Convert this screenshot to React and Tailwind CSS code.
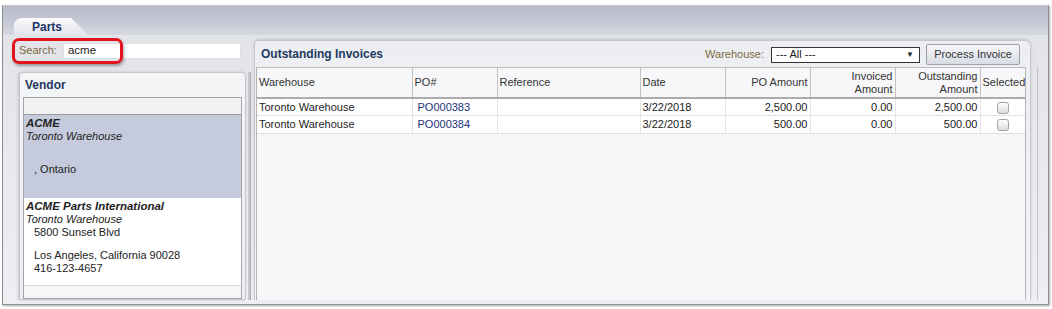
import React from 'react';

// Colonnes du tableau des factures
const columns = [
  { label: 'Warehouse', width: 'w-[155px]', align: 'text-left' },
  { label: 'PO#', width: 'w-[85px]', align: 'text-left' },
  { label: 'Reference', width: 'w-[143px]', align: 'text-left' },
  { label: 'Date', width: 'w-[85px]', align: 'text-left' },
  { label: 'PO Amount', width: 'w-[85px]', align: 'text-right' },
  { label: ['Invoiced', 'Amount'], width: 'w-[85px]', align: 'text-right' },
  { label: ['Outstanding', 'Amount'], width: 'w-[85px]', align: 'text-right' },
  { label: 'Selected', width: 'w-[45px]', align: 'text-center' },
];

const invoices = [
  { warehouse: 'Toronto Warehouse', po: 'PO000383', reference: '', date: '3/22/2018', amount: '2,500.00', invoiced: '0.00', outstanding: '2,500.00' },
  { warehouse: 'Toronto Warehouse', po: 'PO000384', reference: '', date: '3/22/2018', amount: '500.00', invoiced: '0.00', outstanding: '500.00' },
];

const Checkbox = () => (
  <span className="inline-block w-[12px] h-[12px] rounded-[3px] border border-[#a4a4a4] bg-gradient-to-b from-white to-[#dedede] align-middle" />
);

const VendorList = () => (
  <div className="flex-1 mx-[3px] flex flex-col border border-[#a6a6a6] bg-[#f6f6f8] min-h-0">
    <div className="h-[17px] shrink-0 bg-[#f1f1f3] border-b border-[#9b9b9b]" />
    {/* ACME (sélectionné) */}
    <div className="h-[83px] shrink-0 bg-[#c5cbdc] pt-[2px] pl-[2px] leading-[13px]">
      <div className="font-bold italic text-[11.5px]">ACME</div>
      <div className="italic">Toronto Warehouse</div>
      <div className="h-[20px]" />
      <div className="pl-[8px]">, Ontario</div>
    </div>
    {/* ACME Parts International */}
    <div className="h-[88px] shrink-0 bg-white pt-[2px] pl-[2px] leading-[13px] border-b border-[#d9d9d9]">
      <div className="font-bold italic text-[11.5px]">ACME Parts International</div>
      <div className="italic">Toronto Warehouse</div>
      <div className="pl-[8px]">5800 Sunset Blvd</div>
      <div className="h-[10px]" />
      <div className="pl-[8px]">Los Angeles, California 90028</div>
      <div className="pl-[8px]">416-123-4657</div>
    </div>
  </div>
);

export default function App() {
  return (
    <div className="w-[1052px] h-[309px] bg-white pt-[5px] pl-[2px] pr-[3px] pb-[4px] font-['Liberation_Sans',Arial,sans-serif] text-[11px] text-[#222]">
      <div className="h-full flex flex-col border border-[#8f8f8f] border-t-[#c9c9c9] shadow-[1px_1px_2px_rgba(0,0,0,0.35)]">
        {/* Barre d'onglets */}
        <div className="h-[29px] shrink-0 flex items-end pl-[11px] bg-gradient-to-b from-[#b7bcc9] via-[#c3c7d3] to-[#d6d8e1]">
          <div className="w-[74px] h-[17px] pl-[18px] flex items-center bg-gradient-to-b from-[#fbfbfd] to-[#e4e5eb] [clip-path:polygon(0_6px,2px_2px,7px_0,57px_0,74px_17px,0_17px)]">
            <span className="font-bold text-[12px] text-[#1d3567]">Parts</span>
          </div>
        </div>

        <div className="flex-1 flex min-h-0 bg-gradient-to-b from-[#e3e4ea] to-[#eeeff3]">
          {/* Colonne gauche : recherche + fournisseurs */}
          <div className="ml-[9px] w-[236px] flex flex-col pb-[4px]">
            <div className="relative mt-[3px] h-[25px] shrink-0 flex items-center pl-[7px]">
              <span className="text-[#7c6a3c]">Search:</span>
              <div className="ml-[6px] w-[178px] h-[16px] bg-white border border-[#dedede] flex items-center pl-[4px] text-[11.5px]">
                acme
              </div>
              <div className="absolute left-0 top-0 w-[111px] h-[26px] rounded-[7px] border-[3px] border-[#e2141c] shadow-[1px_2px_3px_rgba(0,0,0,0.35)]" />
            </div>

            <div className="mt-[9px] ml-[7px] w-[227px] flex-1 flex flex-col rounded-tl-[4px] rounded-tr-[4px] border border-[#c4c5ca] bg-gradient-to-b from-[#f4f5f7] to-[#eceef1] shadow-[-1px_0_3px_rgba(0,0,0,0.15)] min-h-0">
              <div className="h-[24px] shrink-0 flex items-center pl-[5px]">
                <span className="font-bold text-[12px] text-[#1f3a60]">Vendor</span>
              </div>
              <VendorList />
            </div>
          </div>

          {/* Séparateur */}
          <div className="w-[6px] flex pb-[4px] pt-[37px]">
            <div className="w-[3px] ml-[0px] bg-[#c9c9cc] border-r border-[#adadb0]" />
          </div>

          {/* Panneau de droite : factures */}
          <div className="mt-[5px] mb-[4px] w-[777px] flex flex-col rounded-tl-[4px] rounded-tr-[6px] border-l border-t border-r border-[#c6c8ce] bg-gradient-to-b from-[#eceef2] to-[#f3f4f6] shadow-[0_-1px_3px_rgba(0,0,0,0.12)]">
            <div className="h-[26px] shrink-0 flex items-center pl-[6px] pr-[10px]">
              <span className="font-bold text-[12px] text-[#1f3a60]">Outstanding Invoices</span>
              <span className="ml-auto text-[#7c6a3c]">Warehouse:</span>
              <div className="ml-[7px] w-[149px] h-[16px] bg-white border border-[#333] flex items-center pl-[4px] pr-[5px] mt-[1px]">
                <span>--- All ---</span>
                <span className="ml-auto text-[8px]">▼</span>
              </div>
              <button className="ml-[6px] w-[94px] h-[21px] rounded-[2px] border border-[#9ca1ad] bg-gradient-to-b from-[#f6f7fa] to-[#d9dce5] text-[11px] text-[#333]">
                Process Invoice
              </button>
            </div>

            <div className="flex-1 ml-[1px] w-[770px] border-l border-r border-[#b3b3b6] bg-[#f7f7fa]">
              <table className="table-fixed border-collapse w-[768px]">
                <colgroup>
                  {columns.map((col, i) => (
                    <col key={i} className={col.width} />
                  ))}
                </colgroup>
                <thead>
                  <tr className="h-[30px] bg-[#f7f7f9] border-t border-[#bdbdbd] border-b-2 border-b-[#ababab]">
                    {columns.map((col, i) => (
                      <th
                        key={i}
                        className={`${col.align} font-normal text-[#333] leading-[13px] px-[2px] pt-[1px] align-middle border-r border-[#c3c3c6] last:border-r-0`}
                      >
                        {Array.isArray(col.label) ? (
                          <>
                            <div>{col.label[0]}</div>
                            <div>{col.label[1]}</div>
                          </>
                        ) : (
                          col.label
                        )}
                      </th>
                    ))}
                  </tr>
                </thead>
                <tbody>
                  {invoices.map((inv) => (
                    <tr key={inv.po} className="h-[18px] bg-white border-b border-[#e0e0e2]">
                      <td className="px-[2px] border-r border-[#e4e4e6]">{inv.warehouse}</td>
                      <td className="pl-[5px] border-r border-[#e4e4e6] text-[#23337a]">{inv.po}</td>
                      <td className="px-[2px] border-r border-[#e4e4e6]">{inv.reference}</td>
                      <td className="px-[2px] border-r border-[#e4e4e6]">{inv.date}</td>
                      <td className="px-[2px] text-right border-r border-[#e4e4e6]">{inv.amount}</td>
                      <td className="px-[2px] text-right border-r border-[#e4e4e6]">{inv.invoiced}</td>
                      <td className="px-[2px] text-right border-r border-[#e4e4e6]">{inv.outstanding}</td>
                      <td className="text-center">
                        <Checkbox />
                      </td>
                    </tr>
                  ))}
                </tbody>
              </table>
            </div>
          </div>

          {/* Bord droit */}
          <div className="flex-1 flex pt-[32px] pb-[4px]">
            <div className="w-[7px] border-r border-[#c2c3c8]" />
          </div>
        </div>
      </div>
    </div>
  );
}
